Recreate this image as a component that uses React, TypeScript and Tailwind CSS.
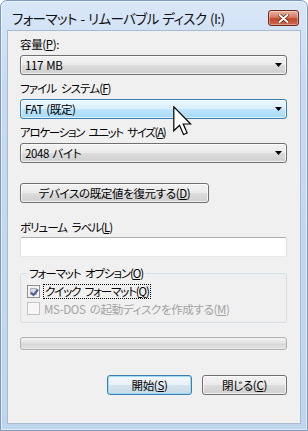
import React from "react";

const U = ({ c }: { c: string }) => <u className="underline underline-offset-[1px] decoration-1">{c}</u>;

const Arrow = () => (
  <svg width="7" height="4" viewBox="0 0 7 4" className="shrink-0">
    <path d="M0 0 H7 L3.5 4 Z" fill="#000" />
  </svg>
);

const Combo = ({ value, focused }: { value: string; focused?: boolean }) => (
  <div
    className={
      focused
        ? "h-[20px] rounded-[3px] border border-[#3c7fb1] bg-[linear-gradient(#eaf6fd_0%,#d9f0fc_50%,#bee6fd_50%,#a7d9f5_100%)] shadow-[inset_0_0_0_1px_rgba(255,255,255,0.6)] flex items-center pl-[4px] pr-[4px]"
        : "h-[20px] rounded-[3px] border border-[#707070] bg-[linear-gradient(#f2f2f2_0%,#ebebeb_50%,#dddddd_50%,#cfcfcf_100%)] shadow-[inset_0_0_0_1px_rgba(255,255,255,0.7)] flex items-center pl-[4px] pr-[4px]"
    }
  >
    <span className="flex-1 leading-[16px] [word-spacing:1px]">{value}</span>
    <Arrow />
  </div>
);

export default function App() {
  return (
    <div className="w-[308px] h-[431px] bg-white relative text-[11.5px] tracking-[-0.35px] text-black font-['Noto_Sans_CJK_JP','Noto_Sans',sans-serif] [font-feature-settings:'palt']">
      <div className="w-full h-full rounded-t-[7px] border border-[#7d99bb] bg-[linear-gradient(#d9e7f8_0%,#c7daf1_20%,#bfd5ee_100%)] shadow-[inset_0_0_0_1px_rgba(255,255,255,0.55)] flex flex-col">
        {/* Title bar */}
        <div className="h-[29px] flex items-start justify-between pl-[11px] pr-[8px]">
          <div className="mt-[7px] text-[13.5px] tracking-[-0.55px] [word-spacing:1px] leading-[20px] text-[#111]">フォーマット - リムーバブル ディスク (I:)</div>
          <div className="mt-[9px] w-[31px] h-[16px] rounded-[3px] border border-[#6e2a1c] bg-[linear-gradient(#eab3a3_0%,#d97a62_45%,#c4472b_55%,#d06a50_100%)] shadow-[inset_0_0_0_1px_rgba(255,255,255,0.35)] flex items-center justify-center">
            <svg width="11" height="9" viewBox="0 0 11 9">
              <path d="M1.5 1 L9.5 8 M9.5 1 L1.5 8" stroke="#5a2015" strokeWidth="3.4" strokeLinecap="round" />
              <path d="M1.5 1 L9.5 8 M9.5 1 L1.5 8" stroke="#fff" strokeWidth="2" strokeLinecap="round" />
            </svg>
          </div>
        </div>
        {/* Client area */}
        <div className="flex-1 mx-[6px] mb-[6px] bg-[#f0f0f0] border border-[#a7bbd3] flex flex-col pl-[12px] pr-[13px] pt-[5px]">
          <div className="leading-[16px]">容量(<U c="P" />):</div>
          <div className="mt-[3px]"><Combo value="117 MB" /></div>
          <div className="mt-[5px] leading-[16px] tracking-[-0.9px] [word-spacing:3px]">ファイル システム(<U c="F" />)</div>
          <div className="mt-[3px]"><Combo value="FAT (既定)" focused /></div>
          <div className="mt-[5px] leading-[16px] tracking-[-1.3px] [word-spacing:3px]">アロケーション ユニット サイズ(<U c="A" />)</div>
          <div className="mt-[3px]"><Combo value="2048 バイト" /></div>

          <div className="mt-[20px] w-[189px] h-[20px] rounded-[3px] border border-[#707070] bg-[linear-gradient(#f2f2f2_0%,#ebebeb_50%,#dddddd_50%,#cfcfcf_100%)] shadow-[inset_0_0_0_1px_rgba(255,255,255,0.7)] flex items-center justify-center leading-[16px]">
            デバイスの既定値を復元する(<U c="D" />)
          </div>

          <div className="mt-[16px] leading-[16px] tracking-[-1px] [word-spacing:3px]">ボリューム ラベル(<U c="L" />)</div>
          <div className="mt-[2px] h-[20px] bg-white border border-[#abadb3] border-x-[#dbdfe6] border-b-[#e3e9ef] rounded-[2px]" />

          <fieldset className="mt-[8px] border border-[#d5dfe5] rounded-[3px] px-[6px] pb-[5px]">
            <legend className="px-[2px] leading-[16px] tracking-[-1.1px] [word-spacing:3px]">フォーマット オプション(<U c="O" />)</legend>
            <div className="mt-[2px] h-[17px] flex items-center gap-[3px]">
              <span className="relative w-[13px] h-[13px] border border-[#8e8f8f] bg-[#f4f4f4] p-[2px]">
                <span className="block w-full h-full border border-[#aeb3b9] bg-[linear-gradient(135deg,#cbcfd5,#f6f6f6)]" />
                <svg className="absolute left-[1px] top-[1px]" width="11" height="11" viewBox="0 0 11 11">
                  <path d="M2 5.5 L4.5 8 L9 2.5" fill="none" stroke="#4a5f97" strokeWidth="2" />
                </svg>
              </span>
              <span className="border border-dotted border-black px-[1px] leading-[13px] tracking-[-1.15px] [word-spacing:3px]">クイック フォーマット(<U c="Q" />)</span>
            </div>
            <div className="h-[17px] flex items-center gap-[3px] text-[#a3a3a3]">
              <span className="w-[13px] h-[13px] border border-[#c4c4c4] bg-[#f7f7f7]" />
              <span className="pl-[1px] leading-[16px] [word-spacing:2px]">MS-DOS の起動ディスクを作成する(<U c="M" />)</span>
            </div>
          </fieldset>

          <div className="mt-[14px] h-[13px] rounded-[3px] border border-[#b2b2b2] bg-[linear-gradient(#f3f3f3_0%,#e3e3e3_45%,#d6d6d6_55%,#e6e6e6_100%)]" />

          <div className="mt-[25px] flex justify-end gap-[10px]">
            <div className="w-[85px] h-[20px] rounded-[3px] border border-[#3c7fb1] bg-[linear-gradient(#f2f8fc_0%,#e8f1f7_50%,#d6e4ee_50%,#c8dae6_100%)] shadow-[inset_0_0_0_1px_#9fdaf7] flex items-center justify-center leading-[16px]">
              開始(<U c="S" />)
            </div>
            <div className="w-[85px] h-[20px] rounded-[3px] border border-[#707070] bg-[linear-gradient(#f2f2f2_0%,#ebebeb_50%,#dddddd_50%,#cfcfcf_100%)] shadow-[inset_0_0_0_1px_rgba(255,255,255,0.7)] flex items-center justify-center leading-[16px]">
              閉じる(<U c="C" />)
            </div>
          </div>
        </div>
      </div>
      {/* Mouse cursor */}
      <svg className="absolute left-[173px] top-[106px]" width="19" height="30" viewBox="0 0 12.6 20">
        <path d="M0.5 0.5 L0.5 16.5 L4.3 12.8 L7 19 L9.4 18 L6.8 12 L11.8 12 Z" fill="#fff" stroke="#000" strokeWidth="0.8" strokeLinejoin="miter" />
      </svg>
    </div>
  );
}
